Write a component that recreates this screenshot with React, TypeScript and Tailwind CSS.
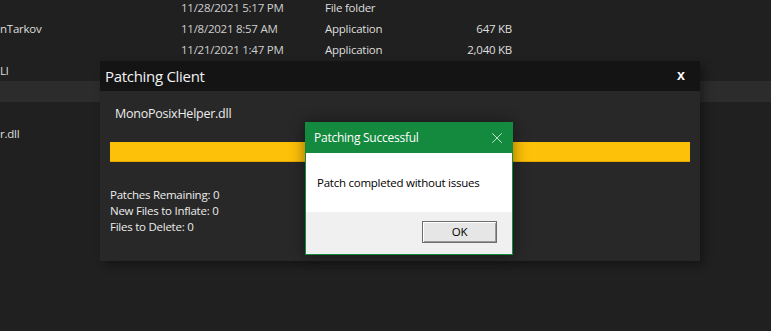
import { X } from "lucide-react"

const rows = [
  { name: "", date: "11/28/2021 5:17 PM", type: "File folder", size: "" },
  { name: "nTarkov", date: "11/8/2021 8:57 AM", type: "Application", size: "647 KB" },
  { name: "", date: "11/21/2021 1:47 PM", type: "Application", size: "2,040 KB" },
  { name: "Ll", date: "", type: "", size: "" },
  { name: "", date: "", type: "", size: "", selected: true },
  { name: "", date: "", type: "", size: "" },
  { name: "r.dll", date: "", type: "", size: "" },
  { name: "", date: "", type: "", size: "" },
  { name: "", date: "", type: "", size: "" },
]

export default function App() {
  return (
    <div
      className="relative h-[331px] w-[771px] overflow-hidden bg-[#202020] text-[11.5px] tracking-[-0.25px]"
      style={{ fontFamily: "'Open Sans', 'Noto Sans', sans-serif" }}
    >
      {/* explorer list behind */}
      <div className="mt-[-3px] flex flex-col">
        {rows.map((r, i) => (
          <div
            key={i}
            className={`flex h-[21px] items-center text-[#dedede] ${r.selected ? "bg-[#2c2c2c]" : ""}`}
          >
            <span className="w-[181px] shrink-0">{r.name}</span>
            <span className="w-[144px] shrink-0 text-[#cfcfcf]">{r.date}</span>
            <span className="w-[100px] shrink-0">{r.type}</span>
            <span className="w-[87px] shrink-0 text-right">{r.size}</span>
          </div>
        ))}
      </div>

      {/* patching client window */}
      <div className="absolute left-[100px] top-[61px] flex h-[200px] w-[600px] flex-col bg-[#282828] shadow-[4px_4px_8px_rgba(0,0,0,0.35)]">
        <div className="flex h-[30px] shrink-0 items-center justify-between bg-[#141414] pl-[5px] pr-[15px]">
          <span className="text-[15px] tracking-[-0.3px] text-[#f2f2f2]">Patching Client</span>
          <span
            className="text-[14px] font-bold text-white"
            style={{ fontFamily: "'Liberation Mono', monospace" }}
          >
            x
          </span>
        </div>
        <div className="flex flex-col px-[10px]">
          <div className="mt-[14px] pl-[5px] text-[12.5px] leading-[18px] text-[#ececec]">
            MonoPosixHelper.dll
          </div>
          <div className="mt-[19px] h-[20px] w-[580px] border-b border-[#e3a900] bg-[#fcc108]" />
          <div className="mt-[25px] flex flex-col text-[11.5px] leading-[16px] text-[#ececec]">
            <span>Patches Remaining: 0</span>
            <span>New Files to Inflate: 0</span>
            <span>Files to Delete: 0</span>
          </div>
        </div>
      </div>

      {/* message box */}
      <div className="absolute left-[305px] top-[122px] flex h-[133px] w-[208px] flex-col border border-[#138a3e] shadow-[0_0_14px_rgba(0,0,0,0.45)]">
        <div className="flex h-[30px] shrink-0 items-center justify-between bg-[#138a3e] pl-[8px] pr-[6px]">
          <span className="text-[12px] text-white">Patching Successful</span>
          <X className="h-[18px] w-[18px] text-white" strokeWidth={1} />
        </div>
        <div className="flex h-[59px] shrink-0 items-center bg-white pl-[11px] text-black">
          Patch completed without issues
        </div>
        <div className="flex flex-1 items-start justify-end bg-[#f0f0f0] pr-[15px] pt-[9px]">
          <div className="flex h-[22px] w-[75px] items-center justify-center border border-[#6d6d6d] bg-[#e6e6e6] text-black shadow-[inset_1px_1px_0_#fff,inset_-1px_-1px_0_#9a9a9a]">
            OK
          </div>
        </div>
      </div>
    </div>
  )
}
